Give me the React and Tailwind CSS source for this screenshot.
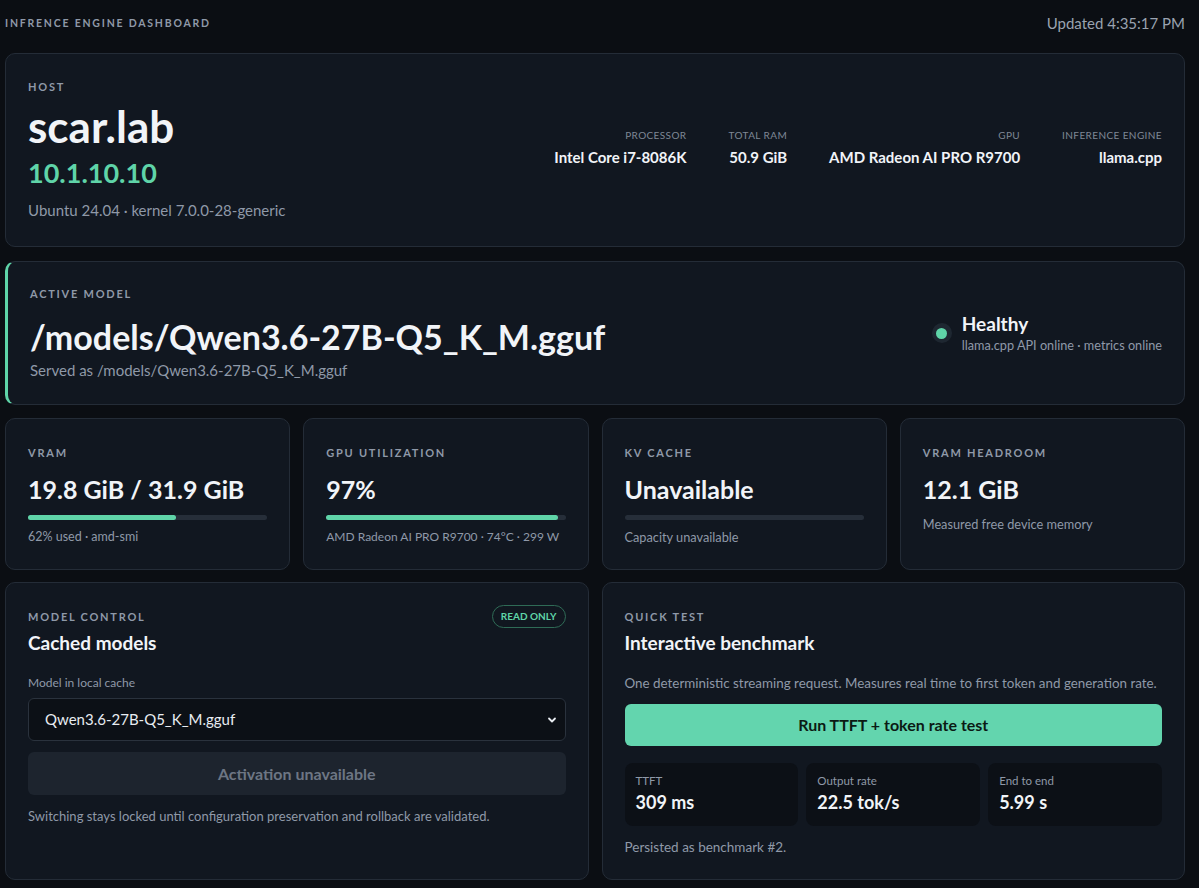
import React from "react";

const FONT = { fontFamily: '"Lato", "Noto Sans", sans-serif' };

function Label({ children, className = "" }) {
  return (
    <div className={`text-[11px] font-bold uppercase leading-[16px] tracking-[0.16em] text-[#8f99a8] ${className}`}>
      {children}
    </div>
  );
}

function Card({ children, className = "" }) {
  return (
    <div className={`rounded-[10px] border border-[#242c37] bg-[#111720] ${className}`}>
      {children}
    </div>
  );
}

function Spec({ label, value }) {
  return (
    <div className="flex flex-col items-end">
      <div className="text-[10px] uppercase leading-[15px] tracking-[0.04em] text-[#7f8896]">{label}</div>
      <div className="mt-[4px] text-[15px] font-bold leading-[21px] text-[#f1f4f8]">{value}</div>
    </div>
  );
}

function Metric({ label, value, bar, sub, subSize = "text-[12.5px]" }) {
  return (
    <Card className="h-[152px] px-[22px] pt-[26px]">
      <Label>{label}</Label>
      <div className="mt-[12px] text-[25px] font-bold leading-[32px] text-[#f1f4f8]">{value}</div>
      {bar !== undefined && (
        <div className="mt-[10px] h-[5px] w-full rounded-full bg-[#262e39]">
          {bar > 0 && <div className="h-full rounded-full bg-[#5fd4a8]" style={{ width: `${bar}%` }} />}
        </div>
      )}
      <div className={`${bar !== undefined ? "mt-[8px]" : "mt-[10px]"} ${subSize} leading-[18px] text-[#8f99a8]`}>{sub}</div>
    </Card>
  );
}

function Stat({ label, value }) {
  return (
    <div className="h-[63px] rounded-[8px] bg-[#0c1016] px-[11px] pt-[10px]">
      <div className="text-[11.5px] leading-[16px] text-[#8f99a8]">{label}</div>
      <div className="mt-[1px] text-[18px] font-bold leading-[25px] text-[#f1f4f8]">{value}</div>
    </div>
  );
}

export default function App() {
  return (
    <div className="min-h-screen overflow-hidden bg-[#0b0e13]" style={FONT}>
      <div className="ml-[5px] w-[1180px] pt-[15px]">
        <div className="flex h-[16px] items-center justify-between">
          <div className="text-[10.5px] font-bold uppercase leading-[16px] tracking-[0.17em] text-[#8f99a8]">
            Infrence Engine Dashboard
          </div>
          <div className="text-[15px] leading-[16px] text-[#9aa3b0]">Updated 4:35:17 PM</div>
        </div>

        {/* host */}
        <Card className="mt-[22px] flex h-[194px] justify-between px-[22px] pt-[25px]">
          <div>
            <Label>Host</Label>
            <div className="mt-[6px] text-[44px] font-bold leading-[50px] text-[#f1f4f8]">scar.lab</div>
            <div className="mt-[5px] text-[27px] font-bold leading-[34px] text-[#5fd4a8]">10.1.10.10</div>
            <div className="mt-[10px] text-[15px] leading-[21px] text-[#8f99a8]">Ubuntu 24.04 · kernel 7.0.0-28-generic</div>
          </div>
          <div className="flex gap-[42px] pt-[49px]">
            <Spec label="Processor" value="Intel Core i7-8086K" />
            <Spec label="Total RAM" value="50.9 GiB" />
            <Spec label="GPU" value="AMD Radeon AI PRO R9700" />
            <Spec label="Inference Engine" value="llama.cpp" />
          </div>
        </Card>

        {/* active model */}
        <div className="mt-[14px] flex h-[144px] items-start justify-between rounded-[10px] border border-[#242c37] border-l-[3px] border-l-[#5fd4a8] bg-[#111720] pl-[22px] pr-[22px] pt-[24px]">
          <div>
            <Label>Active Model</Label>
            <div className="mt-[14px] text-[34px] font-bold leading-[42px] text-[#f1f4f8]">
              /models/Qwen3.6-27B-Q5_K_M.gguf
            </div>
            <div className="mt-[2px] text-[15px] leading-[21px] text-[#8f99a8]">Served as /models/Qwen3.6-27B-Q5_K_M.gguf</div>
          </div>
          <div className="mt-[26px] flex items-center gap-[10px]">
            <div className="flex h-[20px] w-[20px] items-center justify-center rounded-full bg-[#1e2731]">
              <div className="h-[11px] w-[11px] rounded-full bg-[#5fd4a8]" />
            </div>
            <div>
              <div className="text-[19px] font-bold leading-[24px] text-[#f1f4f8]">Healthy</div>
              <div className="text-[12.7px] leading-[18px] text-[#8f99a8]">llama.cpp API online · metrics online</div>
            </div>
          </div>
        </div>

        {/* metrics */}
        <div className="mt-[13px] grid grid-cols-4 gap-[13px]">
          <Metric label="VRAM" value="19.8 GiB / 31.9 GiB" bar={62} sub="62% used · amd-smi" />
          <Metric label="GPU Utilization" value="97%" bar={97} sub="AMD Radeon AI PRO R9700 · 74°C · 299 W" subSize="text-[12px]" />
          <Metric label="KV Cache" value="Unavailable" bar={0} sub="Capacity unavailable" subSize="text-[12.75px]" />
          <Metric label="VRAM Headroom" value="12.1 GiB" sub="Measured free device memory" subSize="text-[12.75px]" />
        </div>

        {/* bottom */}
        <div className="mt-[12px] grid grid-cols-2 gap-[13px]">
          <Card className="h-[298px] px-[22px] pt-[22px]">
            <div className="flex items-start justify-between">
              <div className="pt-[4px]">
                <Label>Model Control</Label>
                <div className="mt-[4px] text-[19px] font-bold leading-[28px] text-[#f1f4f8]">Cached models</div>
              </div>
              <div className="rounded-full border border-[#2f6b56] px-[8px] py-[4px] text-[10px] font-bold leading-[13px] text-[#5fd4a8]">
                READ ONLY
              </div>
            </div>
            <div className="mt-[17px] text-[12px] leading-[18px] text-[#8f99a8]">Model in local cache</div>
            <div className="mt-[6px] flex h-[43px] items-center justify-between rounded-[6px] border border-[#2a323d] bg-[#0c1016] pl-[16px] pr-[8px]">
              <span className="text-[15px] text-[#e8ecf1]">Qwen3.6-27B-Q5_K_M.gguf</span>
              <svg width="10" height="10" viewBox="0 0 10 10" fill="none">
                <path d="M2 3.5L5 6.5L8 3.5" stroke="#e8ecf1" strokeWidth="1.8" strokeLinecap="round" strokeLinejoin="round" />
              </svg>
            </div>
            <div className="mt-[11px] flex h-[43px] items-center justify-center rounded-[6px] bg-[#1d242e] text-[16px] font-bold text-[#6d7684]">
              Activation unavailable
            </div>
            <div className="mt-[12px] text-[13px] leading-[18px] text-[#8f99a8]">
              Switching stays locked until configuration preservation and rollback are validated.
            </div>
          </Card>

          <Card className="h-[298px] px-[22px] pt-[22px]">
            <div className="pt-[4px]">
              <Label>Quick Test</Label>
              <div className="mt-[4px] text-[19px] font-bold leading-[28px] text-[#f1f4f8]">Interactive benchmark</div>
            </div>
            <div className="mt-[17px] text-[13.4px] leading-[19px] text-[#8f99a8]">
              One deterministic streaming request. Measures real time to first token and generation rate.
            </div>
            <div className="mt-[11px] flex h-[42px] items-center justify-center rounded-[6px] bg-[#63d5ae] text-[16px] font-bold text-[#0b1a14]">
              Run TTFT + token rate test
            </div>
            <div className="mt-[17px] grid grid-cols-3 gap-[8px]">
              <Stat label="TTFT" value="309 ms" />
              <Stat label="Output rate" value="22.5 tok/s" />
              <Stat label="End to end" value="5.99 s" />
            </div>
            <div className="mt-[12px] text-[13.5px] leading-[18px] text-[#8f99a8]">Persisted as benchmark #2.</div>
          </Card>
        </div>
      </div>
    </div>
  );
}
